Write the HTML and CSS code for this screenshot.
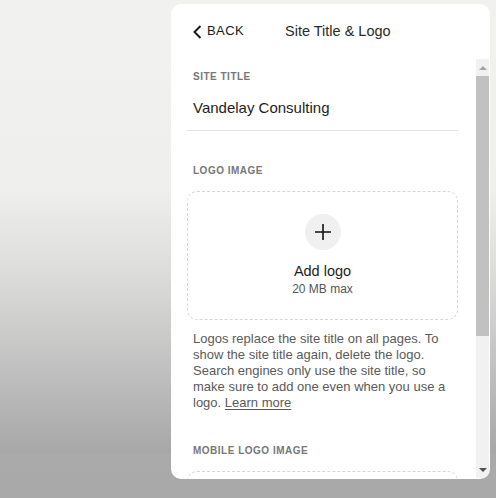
FILE: index.html
```html
<!DOCTYPE html>
<html lang="en">
<head>
    <meta charset="UTF-8">
    <meta name="viewport" content="width=device-width, initial-scale=1.0">
    <title>Site Title &amp; Logo</title>
    <link rel="stylesheet" href="styles.css">
</head>
<body>
    <div class="panel">
        <div class="panel-header">
            <a class="back" href="#">
                <svg width="9" height="14" viewBox="0 0 9 14"><polyline points="7.5,1 1.5,7 7.5,13" fill="none" stroke="#1a1a1a" stroke-width="2"/></svg>
                <span>BACK</span>
            </a>
            <h2>Site Title &amp; Logo</h2>
        </div>
        <div class="panel-body">
            <div class="content">
                <div class="label">Site Title</div>
                <div class="field">Vandelay Consulting</div>

                <div class="label spaced">Logo Image</div>
                <div class="dropzone">
                    <div class="plus">
                        <svg width="16" height="16" viewBox="0 0 16 16"><path d="M8 0V16M0 8H16" stroke="#111" stroke-width="1.6"/></svg>
                    </div>
                    <div class="add">Add logo</div>
                    <div class="max">20 MB max</div>
                </div>
                <p class="help">Logos replace the site title on all pages. To show the site title again, delete the logo. Search engines only use the site title, so make sure to add one even when you use a logo. <a href="#">Learn more</a></p>

                <div class="label spaced">Mobile Logo Image</div>
                <div class="dropzone"></div>
            </div>
            <div class="scrollbar">
                <div class="arrow up"></div>
                <div class="thumb"></div>
                <div class="track"></div>
                <div class="arrow down"></div>
            </div>
        </div>
    </div>
</body>
</html>
```

FILE: styles.css
```css
body {
    margin: 0;
    height: 498px;
    overflow: hidden;
    font-family: "Liberation Sans", Arial, sans-serif;
    background: linear-gradient(to bottom, #f1f1ef 0, #efefed 190px, #d9d9d8 285px, #bdbdbd 380px, #a7a7a7 453px, #aaaaaa 453px, #a9a9a9 498px);
    display: flex;
    justify-content: flex-end;
    align-items: flex-start;
    padding: 4px 6px 0 0;
    box-sizing: border-box;
}
.panel {
    width: 319px;
    height: 475px;
    background: #fff;
    border-radius: 10px;
    display: flex;
    flex-direction: column;
    overflow: hidden;
}
.panel-header {
    height: 55px;
    box-sizing: border-box;
    padding: 0 0 2px 22px;
    display: flex;
    align-items: center;
    flex-shrink: 0;
}
.back {
    display: flex;
    align-items: center;
    gap: 5px;
    color: #1a1a1a;
    text-decoration: none;
    font-size: 13px;
    letter-spacing: 0.4px;
}
.back svg {
    margin-top: 2px;
}
.panel-header h2 {
    margin: 0 0 0 41px;
    font-size: 14.5px;
    font-weight: normal;
    color: #2a2a2a;
}
.panel-body {
    flex: 1;
    display: flex;
    min-height: 0;
}
.content {
    flex: 1;
    overflow: hidden;
    padding: 12px 18px 0 16px;
}
.label {
    padding-left: 6px;
    font-size: 10px;
    line-height: 12px;
    font-weight: bold;
    letter-spacing: 0.5px;
    text-transform: uppercase;
    color: #777;
}
.label.spaced {
    margin-top: 34px;
}
.field {
    padding: 15px 6px 12px;
    font-size: 15px;
    line-height: 20px;
    color: #1e1e1e;
    border-bottom: 1px solid #e4e4e4;
}
.dropzone {
    margin-top: 14px;
    height: 129px;
    box-sizing: border-box;
    border: 1px dashed #d6d6d6;
    border-radius: 10px;
    display: flex;
    flex-direction: column;
    align-items: center;
    padding-top: 22px;
}
.plus {
    width: 36px;
    height: 36px;
    border-radius: 50%;
    background: #f0f0f0;
    display: flex;
    align-items: center;
    justify-content: center;
}
.add {
    margin-top: 11px;
    font-size: 14.5px;
    line-height: 20px;
    color: #1e1e1e;
}
.max {
    font-size: 12px;
    line-height: 16px;
    color: #555;
}
.help {
    margin: 11px 0 0;
    padding: 0 10px 0 6px;
    font-size: 13px;
    line-height: 16px;
    color: #5a5a5a;
}
.help a {
    color: #5a5a5a;
    text-decoration: underline;
    text-underline-offset: 2px;
}
.scrollbar {
    width: 13px;
    margin-right: 1px;
    margin-bottom: 1px;
    background: #f1f1f1;
    display: flex;
    flex-direction: column;
    flex-shrink: 0;
}
.arrow {
    height: 17px;
    display: flex;
    align-items: center;
    justify-content: center;
}
.arrow::after {
    content: "";
    border-left: 4px solid transparent;
    border-right: 4px solid transparent;
}
.arrow.up::after {
    border-bottom: 4px solid #a3a3a3;
}
.arrow.down::after {
    border-top: 4px solid #505050;
}
.thumb {
    height: 260px;
    background: #c1c1c1;
}
.track {
    flex: 1;
}
```
